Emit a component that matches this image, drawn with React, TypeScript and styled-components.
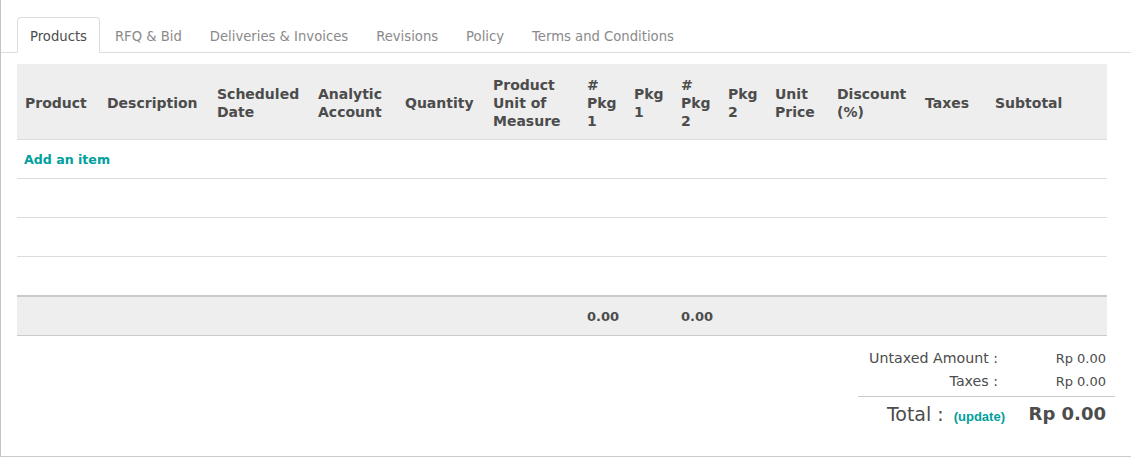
import styled, { createGlobalStyle } from "styled-components";

const GlobalStyle = createGlobalStyle`
  html, body {
    margin: 0;
    padding: 0;
    background: #fff;
  }
  body {
    font-family: "DejaVu Sans", Verdana, sans-serif;
    font-size: 13px;
    color: #4c4c4c;
  }
`;

const Sheet = styled.div`
  box-sizing: border-box;
  width: 100%;
  height: 457px;
  border-left: 1px solid #c4c4c8;
  border-bottom: 1px solid #cbcbcb;
  box-shadow: 0 1px 0 #ececec;
  background: #fff;
`;

const TabStrip = styled.ul`
  display: flex;
  list-style: none;
  margin: 0;
  padding: 17px 0 0 16px;
  border-bottom: 1px solid #dcdcdc;
`;

const Tab = styled.li<{ $active?: boolean }>`
  box-sizing: border-box;
  display: flex;
  align-items: center;
  height: 36px;
  margin: 0 2px -1px 0;
  padding: 2px 12px 0;
  border: 1px solid ${({ $active }) => ($active ? "#dcdcdc" : "transparent")};
  border-bottom-color: ${({ $active }) => ($active ? "#fff" : "transparent")};
  border-radius: 4px 4px 0 0;
  background: ${({ $active }) => ($active ? "#fff" : "transparent")};
  color: ${({ $active }) => ($active ? "#4c4c4c" : "#8a8a8a")};
  font-size: 13.2px;
  white-space: nowrap;
  cursor: pointer;
`;

const Body = styled.div`
  padding: 11px 24px 0 16px;
`;

const Lines = styled.table`
  width: 100%;
  table-layout: fixed;
  border-collapse: collapse;
`;

const Col = styled.col<{ $w?: number }>`
  width: ${({ $w }) => ($w ? `${$w}px` : "auto")};
`;

const HeadCell = styled.th`
  background: #eeeeee;
  padding: 12px 8px 9px;
  border-bottom: 1px solid #dcdcdc;
  text-align: left;
  vertical-align: middle;
  font-size: 14px;
  font-weight: bold;
  line-height: 18px;
  color: #4c4c4c;
`;

const Row = styled.tr`
  height: 39px;
  td {
    border-bottom: 1px solid #dcdcdc;
  }
`;

const Cell = styled.td`
  padding: 0 7px;
`;

const AddLink = styled.a`
  color: #00a09d;
  font-size: 12.6px;
  font-weight: bold;
  text-decoration: none;
  cursor: pointer;
`;

const FootCell = styled.td`
  height: 37px;
  padding: 1px 8px 0;
  background: #eeeeee;
  border-top: 2px solid #cacaca;
  border-bottom: 1px solid #cacaca;
  font-weight: bold;
  font-size: 13px;
  color: #4c4c4c;
`;

const Totals = styled.div`
  display: grid;
  grid-template-columns: auto 101px;
  width: max-content;
  margin: 11px 1px 0 auto;
`;

const Label = styled.div`
  padding-right: 7px;
  text-align: right;
  line-height: 22px;
  font-size: 14.2px;
  color: #4c4c4c;
`;

const Amount = styled.div`
  text-align: right;
  line-height: 22px;
  padding-top: 1px;
  font-size: 13px;
  color: #4c4c4c;
`;

const Separator = styled.div`
  grid-column: 1 / -1;
  height: 0;
  margin: 3px -9px 0 -11px;
  border-top: 1px solid #cacaca;
`;

const TotalLabel = styled.div`
  display: flex;
  align-items: baseline;
  justify-content: flex-end;
  gap: 10px;
  line-height: 34px;
  font-size: 19px;
  color: #4c4c4c;
`;

const Update = styled.a`
  font-family: "Liberation Sans", Arial, sans-serif;
  font-size: 13px;
  font-weight: bold;
  color: #00a09d;
  cursor: pointer;
`;

const TotalAmount = styled.div`
  text-align: right;
  line-height: 34px;
  font-size: 18px;
  font-weight: bold;
  color: #4c4c4c;
`;

const tabs = [
  "Products",
  "RFQ & Bid",
  "Deliveries & Invoices",
  "Revisions",
  "Policy",
  "Terms and Conditions",
];

const columns: { label: string; w?: number; sum?: boolean }[] = [
  { label: "Product", w: 82 },
  { label: "Description", w: 110 },
  { label: "Scheduled Date", w: 101 },
  { label: "Analytic Account", w: 87 },
  { label: "Quantity", w: 88 },
  { label: "Product Unit of Measure", w: 94 },
  { label: "# Pkg 1", w: 47, sum: true },
  { label: "Pkg 1", w: 47 },
  { label: "# Pkg 2", w: 47, sum: true },
  { label: "Pkg 2", w: 47 },
  { label: "Unit Price", w: 62 },
  { label: "Discount (%)", w: 88 },
  { label: "Taxes", w: 70 },
  { label: "Subtotal" },
];

export default function App() {
  return (
    <>
      <GlobalStyle />
      <Sheet>
        <TabStrip>
          {tabs.map((t, i) => (
            <Tab key={t} $active={i === 0}>
              {t}
            </Tab>
          ))}
        </TabStrip>
        <Body>
          <Lines>
            <colgroup>
              {columns.map((c) => (
                <Col key={c.label} $w={c.w} />
              ))}
            </colgroup>
            <thead>
              <tr>
                {columns.map((c) => (
                  <HeadCell key={c.label}>{c.label}</HeadCell>
                ))}
              </tr>
            </thead>
            <tbody>
              <Row>
                <Cell colSpan={columns.length}>
                  <AddLink>Add an item</AddLink>
                </Cell>
              </Row>
              <Row>
                <Cell colSpan={columns.length} />
              </Row>
              <Row>
                <Cell colSpan={columns.length} />
              </Row>
              <Row>
                <Cell colSpan={columns.length} />
              </Row>
            </tbody>
            <tfoot>
              <tr>
                {columns.map((c) => (
                  <FootCell key={c.label}>{c.sum ? "0.00" : ""}</FootCell>
                ))}
              </tr>
            </tfoot>
          </Lines>
          <Totals>
            <Label>Untaxed Amount :</Label>
            <Amount>Rp 0.00</Amount>
            <Label>Taxes :</Label>
            <Amount>Rp 0.00</Amount>
            <Separator />
            <TotalLabel>
              <span>Total :</span>
              <Update>(update)</Update>
            </TotalLabel>
            <TotalAmount>Rp 0.00</TotalAmount>
          </Totals>
        </Body>
      </Sheet>
    </>
  );
}
